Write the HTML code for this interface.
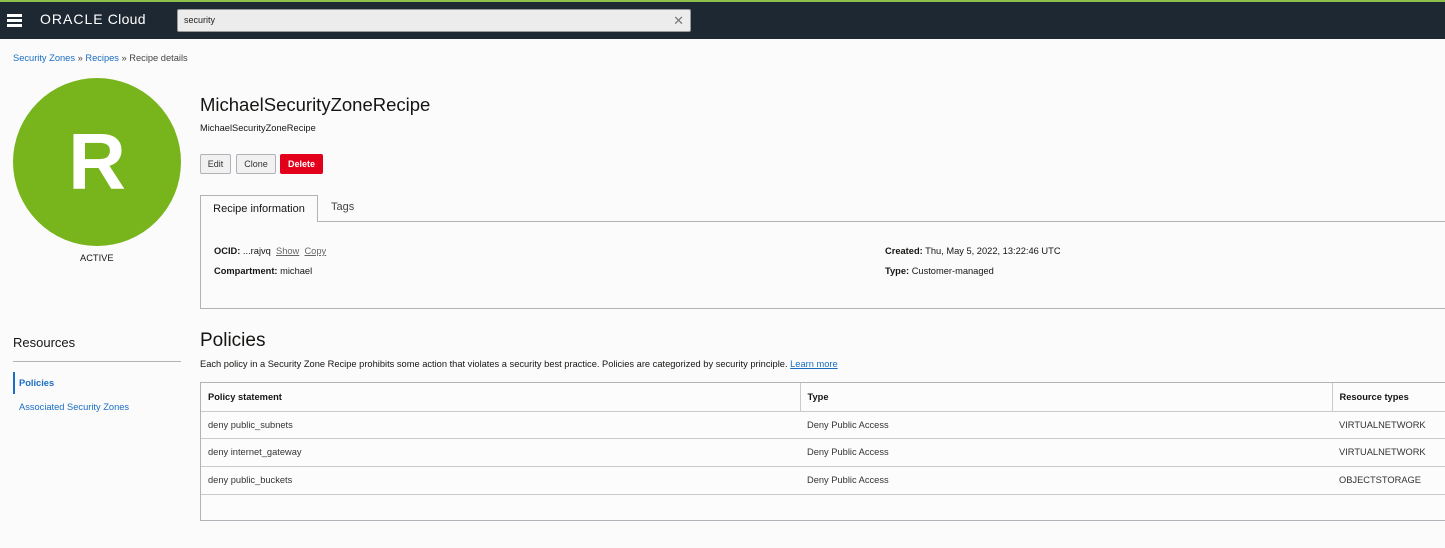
<!DOCTYPE html>
<html><head><meta charset="utf-8"><style>
*{box-sizing:border-box;margin:0;padding:0}
body{width:1445px;height:548px;overflow:hidden;background:#fbfbfb;font-family:"Liberation Sans",sans-serif;color:#161513;position:relative;font-size:9.3px}
.a{position:absolute}
.top{left:0;top:0;width:1445px;height:39px;background:#1e2833;border-top:2px solid #8cc04a}
a{color:#1a6ec2;text-decoration:none}
.btn{position:absolute;top:154px;height:20px;border:1px solid #b0b3b8;background:#f1f1f1;border-radius:2px;font-size:9px;line-height:18px;text-align:center;color:#333}
td,th{border-bottom:1px solid #c8cacd;text-align:left;font-size:9.3px;padding-left:7px;color:#333}
th{font-weight:bold;color:#161513}
</style></head><body>
<div class="a top">
 <div class="a" style="left:7px;top:12px;width:15px;height:3px;background:#fff;box-shadow:0 5px 0 #fff,0 10px 0 #fff"></div>
 <div class="a" style="left:40px;top:9px;color:#fff;font-size:14px;letter-spacing:0.3px"><b style="font-weight:normal;letter-spacing:1px">ORACLE</b> Cloud</div>
 <div class="a" style="left:177px;top:7px;width:514px;height:23px;background:#ececec;border:1px solid #999;border-radius:2px;font-size:9px;line-height:21px;padding-left:6px;color:#222">security<span style="position:absolute;right:6px;top:0;font-size:13px;color:#777">✕</span></div>
</div>
<div class="a" style="left:13px;top:53px;color:#444"><a>Security Zones</a> » <a>Recipes</a> » Recipe details</div>
<div class="a" style="left:13px;top:78px;width:168px;height:168px;border-radius:50%;background:#78b41b;color:#fff;font-size:80px;font-weight:bold;text-align:center;line-height:168px">R</div>
<div class="a" style="left:80px;top:253px">ACTIVE</div>
<div class="a" style="left:200px;top:94px;font-size:18.5px">MichaelSecurityZoneRecipe</div>
<div class="a" style="left:200px;top:123px">MichaelSecurityZoneRecipe</div>
<div class="btn" style="left:200px;width:31px">Edit</div>
<div class="btn" style="left:236px;width:40px">Clone</div>
<div class="btn" style="left:280px;width:43px;background:#e2001a;border-color:#e2001a;color:#fff;font-weight:bold">Delete</div>
<div class="a" style="left:200px;top:221px;width:1245px;height:88px;border:1px solid #b0b3b8;border-right:none"></div>
<div class="a" style="left:200px;top:195px;width:118px;height:27px;border:1px solid #b0b3b8;border-bottom:none;background:#fbfbfb;font-size:11px;text-align:center;line-height:26px">Recipe information</div>
<div class="a" style="left:331px;top:201px;font-size:11px;color:#444">Tags</div>
<div class="a" style="left:214px;top:246px"><b>OCID:</b> ...rajvq &nbsp;<u style="color:#666">Show</u> &nbsp;<u style="color:#666">Copy</u></div>
<div class="a" style="left:214px;top:266px"><b>Compartment:</b> michael</div>
<div class="a" style="left:885px;top:246px"><b>Created:</b> Thu, May 5, 2022, 13:22:46 UTC</div>
<div class="a" style="left:885px;top:266px"><b>Type:</b> Customer-managed</div>
<div class="a" style="left:13px;top:335px;font-size:13px">Resources</div>
<div class="a" style="left:13px;top:361px;width:168px;height:1px;background:#b0b3b8"></div>
<div class="a" style="left:13px;top:372px;width:2px;height:22px;background:#1a6ec2"></div>
<div class="a" style="left:19px;top:378px;color:#1a6ec2;font-weight:bold">Policies</div>
<div class="a" style="left:19px;top:402px;color:#1a6ec2">Associated Security Zones</div>
<div class="a" style="left:200px;top:330px;font-size:19px">Policies</div>
<div class="a" style="left:200px;top:359px">Each policy in a Security Zone Recipe prohibits some action that violates a security best practice. Policies are categorized by security principle. <a style="text-decoration:underline">Learn more</a></div>
<div class="a" style="left:200px;top:382px;width:1245px;height:139px;border:1px solid #b0b3b8;border-right:none;background:#fcfcfc">
<table style="border-collapse:collapse;width:1245px">
<tr style="height:28px"><th style="width:599px;border-right:1px solid #c8cacd">Policy statement</th><th style="width:532px;border-right:1px solid #c8cacd">Type</th><th>Resource types</th></tr>
<tr style="height:27px"><td>deny public_subnets</td><td>Deny Public Access</td><td>VIRTUALNETWORK</td></tr>
<tr style="height:28px"><td>deny internet_gateway</td><td>Deny Public Access</td><td>VIRTUALNETWORK</td></tr>
<tr style="height:28px"><td>deny public_buckets</td><td>Deny Public Access</td><td>OBJECTSTORAGE</td></tr>
</table></div>
</body></html>
